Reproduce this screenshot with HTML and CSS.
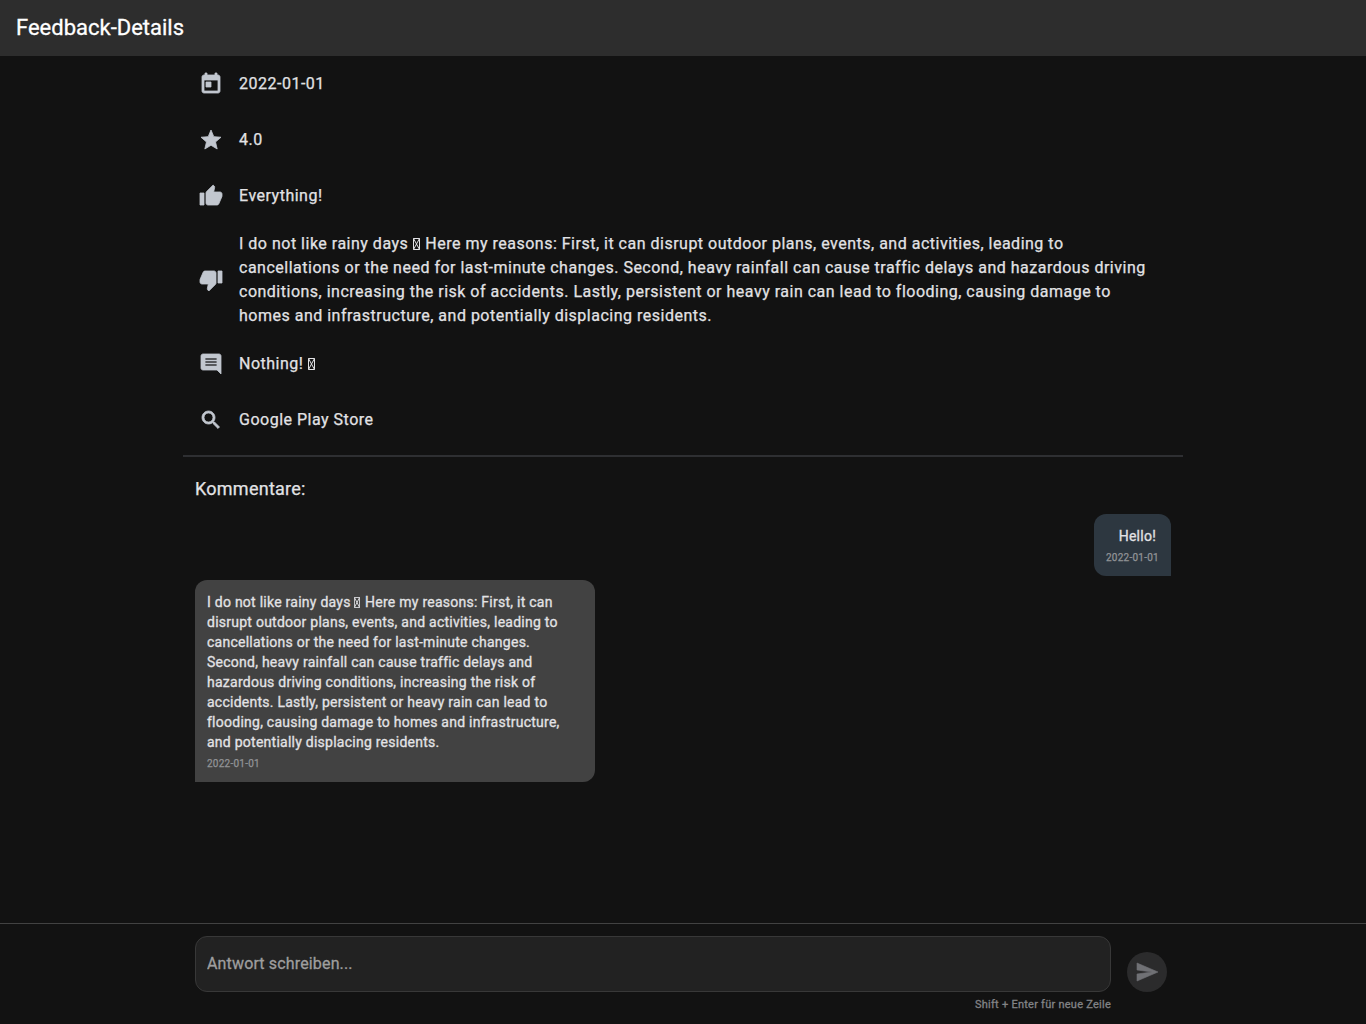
FILE: index.html
```html
<!DOCTYPE html>
<html lang="de">
<head>
<meta charset="utf-8">
<title>Feedback-Details</title>
<link rel="stylesheet" href="styles.css">
</head>
<body>
<svg class="defs" aria-hidden="true">
  <symbol id="glyph-box" viewBox="0 0 7 12" preserveAspectRatio="none"><path d="M.5.5h6v11h-6zM.5.5l6 11M6.5.5l-6 11" fill="none" stroke="currentColor" stroke-width="1"/></symbol>
</svg>
<header class="app-bar"><h1 class="app-title">Feedback-Details</h1></header>
<main class="content">
  <ul class="details">
    <li class="detail"><svg class="icon" viewBox="0 0 24 24"><path d="M19 3h-1V1h-2v2H8V1H6v2H5c-1.110 0-1.990.9-1.990 2L3 19c0 1.100.890 2 2 2h14c1.100 0 2-.9 2-2V5c0-1.100-.9-2-2-2zm0 16H5V8h14v11zM7 10h5v5H7z"/></svg><span class="detail-text">2022-01-01</span></li>
    <li class="detail"><svg class="icon" viewBox="0 0 24 24"><path d="M12 17.270 18.180 21l-1.640-7.030L22 9.240l-7.190-.610L12 2 9.190 8.630 2 9.240l5.460 4.730L5.820 21z"/></svg><span class="detail-text">4.0</span></li>
    <li class="detail"><svg class="icon" viewBox="0 0 24 24"><path d="M1 21h4V9H1v12zm22-11c0-1.100-.9-2-2-2h-6.310l.950-4.570.030-.320c0-.410-.170-.790-.440-1.060L14.170 1 7.590 7.590C7.220 7.950 7 8.450 7 9v10c0 1.100.9 2 2 2h9c.830 0 1.540-.5 1.840-1.220l3.020-7.050c.090-.230.140-.470.140-.730v-2z"/></svg><span class="detail-text">Everything!</span></li>
    <li class="detail"><svg class="icon" viewBox="0 0 24 24"><path d="M15 3H6c-.830 0-1.540.5-1.840 1.220l-3.020 7.050c-.090.230-.140.470-.140.730v2c0 1.100.9 2 2 2h6.310l-.950 4.570-.030.320c0 .410.170.790.440 1.060L9.830 23l6.590-6.590c.360-.360.580-.860.580-1.410V5c0-1.100-.9-2-2-2zm4 0v12h4V3h-4z"/></svg><span class="detail-text">I do not like rainy days <svg class="glyph"><use href="#glyph-box"/></svg> Here my reasons: First, it can disrupt outdoor plans, events, and activities, leading to cancellations or the need for last-minute changes. Second, heavy rainfall can cause traffic delays and hazardous driving conditions, increasing the risk of accidents. Lastly, persistent or heavy rain can lead to flooding, causing damage to homes and infrastructure, and potentially displacing residents.</span></li>
    <li class="detail"><svg class="icon" viewBox="0 0 24 24"><path d="M21.990 4c0-1.100-.890-2-1.990-2H4c-1.100 0-2 .9-2 2v12c0 1.100.9 2 2 2h14l4 4-.010-18zM18 14H6v-2h12v2zm0-3H6V9h12v2zm0-3H6V6h12v2z"/></svg><span class="detail-text">Nothing! <svg class="glyph"><use href="#glyph-box"/></svg></span></li>
    <li class="detail"><svg class="icon" viewBox="0 0 24 24"><path d="M15.500 14h-.790l-.280-.270C15.410 12.590 16 11.110 16 9.500 16 5.910 13.090 3 9.500 3S3 5.910 3 9.500 5.910 16 9.500 16c1.610 0 3.090-.590 4.230-1.570l.270.280v.790l5 4.990L20.490 19l-4.990-5zm-6 0C7.010 14 5 11.990 5 9.500S7.010 5 9.500 5 14 7.010 14 9.500 11.990 14 9.500 14z"/></svg><span class="detail-text">Google Play Store</span></li>
  </ul>
  <hr class="divider">
  <section class="comments">
    <h2 class="comments-title">Kommentare:</h2>
    <article class="bubble bubble-own"><p class="message">Hello!</p><time class="date">2022-01-01</time></article>
    <article class="bubble bubble-other"><p class="message">I do not like rainy days <svg class="glyph glyph-small"><use href="#glyph-box"/></svg> Here my reasons: First, it can disrupt outdoor plans, events, and activities, leading to cancellations or the need for last-minute changes. Second, heavy rainfall can cause traffic delays and hazardous driving conditions, increasing the risk of accidents. Lastly, persistent or heavy rain can lead to flooding, causing damage to homes and infrastructure, and potentially displacing residents.</p><time class="date">2022-01-01</time></article>
  </section>
</main>
<footer class="reply">
  <div class="reply-inner">
    <div class="field-column">
      <input class="field" type="text" placeholder="Antwort schreiben...">
      <span class="hint">Shift + Enter für neue Zeile</span>
    </div>
    <button class="send" type="button" aria-label="Senden"><svg class="send-icon" viewBox="0 0 24 24"><path d="M2.010 21 23 12 2.010 3 2 10l15 2-15 2z"/></svg></button>
  </div>
</footer>
</body>
</html>
```
FILE: styles.css
```css
* { box-sizing: border-box; }
body {
  margin: 0;
  height: 100vh;
  display: flex;
  flex-direction: column;
  overflow: hidden;
  background: #121212;
  color: #e2e2e5;
  font-family: Roboto, "Liberation Sans", sans-serif;
}
h1, h2, p, ul { margin: 0; padding: 0; }
.defs { display: none; }
.app-bar {
  flex: none;
  height: 56px;
  padding: 0 16px;
  display: flex;
  align-items: center;
  background: #2d2d2d;
}
.app-title { color: #fff; font-size: 22px; font-weight: 400; line-height: 28px; -webkit-text-stroke: .3px; }
.content { flex: 1; width: 1000px; margin: 0 auto; }
.details { list-style: none; }
.detail {
  min-height: 56px;
  padding: 8px 24px 8px 16px;
  display: flex;
  align-items: center;
  gap: 16px;
}
.icon { flex: none; width: 24px; height: 24px; overflow: visible; fill: #c2c7cf; stroke: #c2c7cf; stroke-width: .8; }
.detail-text { font-size: 16px; line-height: 24px; letter-spacing: .5px; -webkit-text-stroke: .25px; }
.glyph { width: 7px; height: 12px; margin-right: 1px; vertical-align: -1px; }
.glyph-small { width: 6px; height: 11px; }
.divider { height: 2px; margin: 7px 0; border: 0; background: #2e2f32; }
.comments { padding: 12px; display: flex; flex-direction: column; }
.comments-title { margin-bottom: 12px; font-size: 18px; font-weight: 400; line-height: 26px; letter-spacing: .25px; -webkit-text-stroke: .25px; }
.bubble { padding: 12px; display: flex; flex-direction: column; }
.bubble-own {
  align-self: flex-end;
  align-items: flex-end;
  margin-bottom: 4px;
  border-radius: 12px 12px 0 12px;
  background: #2d3740;
}
.bubble-other {
  align-self: flex-start;
  width: 400px;
  border-radius: 12px 12px 12px 0;
  background: #424242;
}
.message { font-size: 14px; line-height: 20px; letter-spacing: .25px; -webkit-text-stroke: .3px; }
.bubble-own .message { padding-right: 3px; }
.date { margin-top: 6px; font-size: 10px; line-height: 12px; letter-spacing: .25px; color: #929497; -webkit-text-stroke: .25px; }
.reply { flex: none; height: 101px; padding-top: 12px; border-top: 1px solid #424242; }
.reply-inner { width: 1000px; margin: 0 auto; padding: 0 16px 0 12px; display: flex; gap: 16px; }
.field-column { flex: 1; display: flex; flex-direction: column; }
.field {
  width: 100%;
  height: 56px;
  padding: 0 11px 2px;
  border: 1px solid #383838;
  border-radius: 12px;
  background: #222;
  color: #e2e2e5;
  font: 400 16px/24px Roboto, "Liberation Sans", sans-serif;
  letter-spacing: .15px;
  outline: 0;
}
.field::placeholder { color: #9e9e9e; opacity: 1; -webkit-text-stroke: .3px; }
.hint { align-self: flex-end; margin-top: 5px; font-size: 11px; line-height: 16px; letter-spacing: .25px; color: #828386; -webkit-text-stroke: .3px; }
.send {
  width: 40px;
  height: 40px;
  margin-top: 16px;
  padding: 0;
  display: grid;
  place-items: center;
  border: 0;
  border-radius: 50%;
  background: #2b2b2c;
}
.send-icon { width: 24px; height: 24px; overflow: visible; fill: #707175; stroke: #707175; stroke-width: .6; }
```
